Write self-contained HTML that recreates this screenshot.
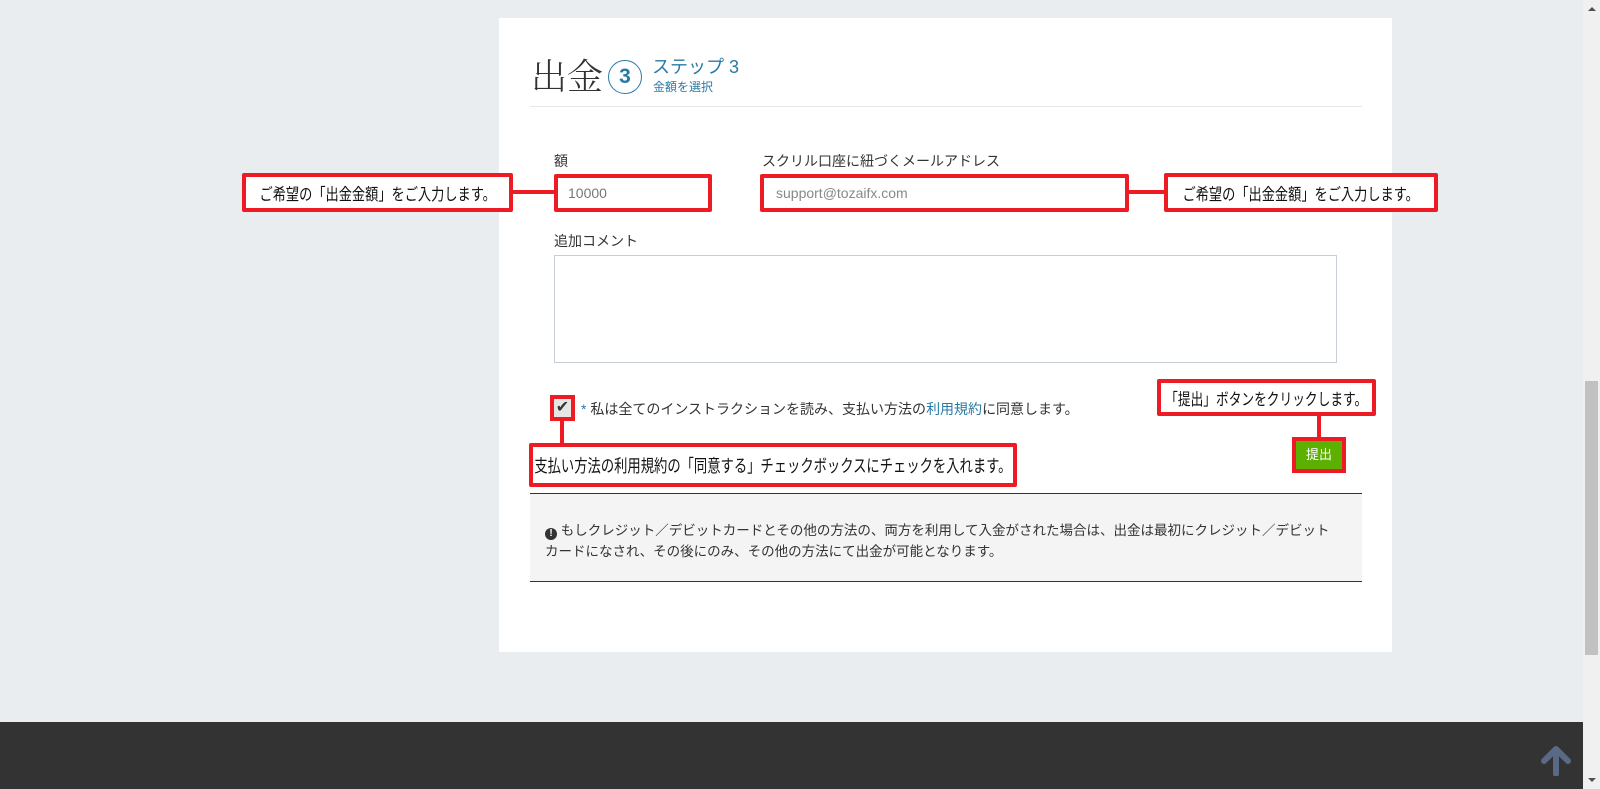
<!DOCTYPE html>
<html><head><meta charset="utf-8"><style>
*{box-sizing:border-box;margin:0;padding:0}
body{width:1600px;height:789px;overflow:hidden;background:#e9edf0;font-family:"Liberation Sans","Noto Sans CJK JP",sans-serif;position:relative;color:#333}
.a{position:absolute}
.card{left:499px;top:18px;width:893px;height:634px;background:#fff}
.red{border:4px solid #ed1c24;background:#fff;border-radius:2px;font-size:16.5px;color:#111;display:flex;align-items:center;justify-content:center;white-space:nowrap}
.red span.s{display:inline-block;transform:scaleX(.8);transform-origin:center}
.rl{background:#ed1c24}
.inp{border:1px solid #c8ced6;background:#fff}
.lbl{font-size:14px;color:#333}
</style></head><body>
<div class="a card"></div>
<div class="a" style="left:531px;top:54px;font-family:'Liberation Serif','Noto Serif CJK SC',serif;font-size:36px;color:#333;font-weight:300;line-height:46px">出金</div>
<div class="a" style="left:608px;top:60px;width:34px;height:34px;border:1.5px solid #2a7aa5;border-radius:50%;color:#2a7aa5;font-weight:bold;font-size:21px;text-align:center;line-height:31px">3</div>
<div class="a" style="left:652px;top:56px;color:#2a7aa5;font-size:18px;line-height:22px">ステップ 3</div>
<div class="a" style="left:653px;top:80px;color:#2a7aa5;font-size:12px;line-height:14px">金額を選択</div>
<div class="a" style="left:530px;top:106px;width:832px;height:1px;background:#e6e6e6"></div>

<div class="a lbl" style="left:554px;top:151px">額</div>
<div class="a lbl" style="left:762px;top:151px">スクリル口座に紐づくメールアドレス</div>
<div class="a red" style="left:554px;top:174px;width:158px;height:38px;justify-content:flex-start;padding-left:10px;font-size:14px;color:#777">10000</div>
<div class="a red" style="left:760px;top:174px;width:369px;height:38px;justify-content:flex-start;padding-left:12px;font-size:14px;color:#888">support@tozaifx.com</div>
<div class="a red" style="left:242px;top:173px;width:271px;height:39px"><span class="s">ご希望の「出金金額」をご入力します。</span></div>
<div class="a rl" style="left:512px;top:190px;width:43px;height:4px"></div>
<div class="a red" style="left:1164px;top:173px;width:274px;height:39px"><span class="s">ご希望の「出金金額」をご入力します。</span></div>
<div class="a rl" style="left:1128px;top:190px;width:37px;height:4px"></div>

<div class="a lbl" style="left:554px;top:231px">追加コメント</div>
<div class="a inp" style="left:554px;top:255px;width:783px;height:108px"></div>

<div class="a" style="left:550px;top:395px;width:25px;height:26px;border:4px solid #ed1c24;background:#e6e6e6;color:#333;font-size:16px;line-height:18px;text-align:center">✔</div>
<div class="a" style="left:581px;top:399px;font-size:14px;color:#333;white-space:nowrap"><span style="color:#2a7aa5">*</span> 私は全てのインストラクションを読み、支払い方法の<span style="color:#2a7aa5">利用規約</span>に同意します。</div>
<div class="a rl" style="left:560px;top:420px;width:4px;height:24px"></div>
<div class="a red" style="left:529px;top:443px;width:488px;height:44px;font-size:17.5px"><span class="s" style="transform:scaleX(.76)">支払い方法の利用規約の「同意する」チェックボックスにチェックを入れます。</span></div>

<div class="a red" style="left:1157px;top:379px;width:219px;height:37px"><span class="s" style="transform:scaleX(.77)">「提出」ボタンをクリックします。</span></div>
<div class="a rl" style="left:1317px;top:415px;width:4px;height:23px"></div>
<div class="a" style="left:1292px;top:437px;width:54px;height:36px;border:4px solid #ed1c24;background:#5cb100;color:#fff;font-size:13px;text-align:center;line-height:28px">提出</div>

<div class="a" style="left:530px;top:493px;width:832px;height:89px;background:#f4f4f4;border-top:1px solid #333;border-bottom:1px solid #333"></div>
<div class="a" style="left:545px;top:520px;width:790px;font-size:13.5px;line-height:21px;color:#333"><span style="display:inline-block;width:12px;height:12px;border-radius:50%;background:#333;color:#fff;font-size:10px;line-height:12px;text-align:center;font-weight:bold;vertical-align:-1px">!</span> もしクレジット／デビットカードとその他の方法の、両方を利用して入金がされた場合は、出金は最初にクレジット／デビットカードになされ、その後にのみ、その他の方法にて出金が可能となります。</div>

<div class="a" style="left:0;top:722px;width:1583px;height:67px;background:#333"></div>
<svg class="a" style="left:1540px;top:746px" width="32" height="30" viewBox="0 0 32 30"><path d="M16 3 L4 15 M16 3 L28 15 M16 4 V28" stroke="#5a6a86" stroke-width="6" stroke-linecap="round" fill="none"/></svg>

<div class="a" style="left:1583px;top:0;width:17px;height:789px;background:#f0f0f0"></div>
<div class="a" style="left:1585px;top:381px;width:13px;height:274px;background:#c1c1c1"></div>
<div class="a" style="left:1588px;top:7px;width:0;height:0;border-left:4px solid transparent;border-right:4px solid transparent;border-bottom:4px solid #505050"></div>
<div class="a" style="left:1588px;top:778px;width:0;height:0;border-left:4px solid transparent;border-right:4px solid transparent;border-top:4px solid #505050"></div>
</body></html>
